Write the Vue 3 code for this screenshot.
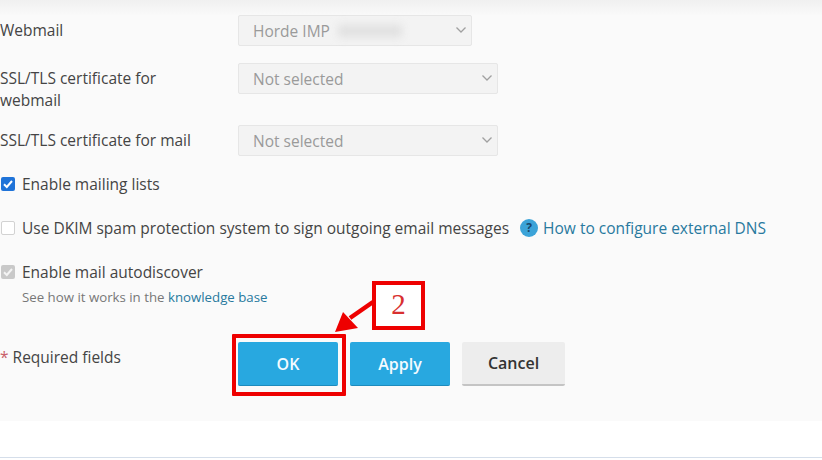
<script setup>
const selects = [
  { label: 'Webmail', value: 'Horde IMP', blurred: true, narrow: true },
  { label: 'SSL/TLS certificate for webmail', value: 'Not selected' },
  { label: 'SSL/TLS certificate for mail', value: 'Not selected' }
]
</script>

<template>
  <div class="page">
    <div class="panel">
      <div v-for="s in selects" :key="s.label" class="row">
        <div class="label">{{ s.label }}</div>
        <div class="select" :class="{ narrow: s.narrow }">
          <span>{{ s.value }}</span>
          <span v-if="s.blurred" class="smudge"></span>
          <svg class="chevron" width="12" height="8" viewBox="0 0 12 8">
            <path d="M1.5 1.5 6 6l4.500-4.500" fill="none" stroke="#a0a0a0" stroke-width="1.300" />
          </svg>
        </div>
      </div>

      <div class="check first">
        <span class="box on">
          <svg width="14" height="14" viewBox="0 0 14 14">
            <path d="M3 7.300 5.800 10 11 4" fill="none" stroke="#fff" stroke-width="2" />
          </svg>
        </span>
        <span>Enable mailing lists</span>
      </div>

      <div class="check">
        <span class="box"></span>
        <span>Use DKIM spam protection system to sign outgoing email messages</span>
        <span class="help">?</span>
        <a class="link">How to configure external DNS</a>
      </div>

      <div class="check">
        <span class="box off">
          <svg width="14" height="14" viewBox="0 0 14 14">
            <path d="M3 7.300 5.800 10 11 4" fill="none" stroke="#f4f4f4" stroke-width="2" />
          </svg>
        </span>
        <span>Enable mail autodiscover</span>
      </div>
      <div class="hint">See how it works in the <a class="link">knowledge base</a></div>

      <div class="actions">
        <div class="required"><span class="star">*</span> Required fields</div>
        <button class="btn primary">OK</button>
        <button class="btn primary">Apply</button>
        <button class="btn plain">Cancel</button>
      </div>
    </div>

    <div class="rule"></div>

    <!-- red annotation on top of the screenshot -->
    <div class="mark-ok"></div>
    <div class="mark-num">2</div>
    <svg class="mark-arrow" width="60" height="60" viewBox="0 0 60 60">
      <path d="M38 4 15 20" stroke="#ee0000" stroke-width="4.500" fill="none" />
      <path d="M0 34 8 14 23 30Z" fill="#ee0000" />
    </svg>
  </div>
</template>

<style scoped>
.page {
  position: relative;
  width: 822px;
  height: 460px;
  overflow: hidden;
  background: #fff;
  font-family: "Open Sans", "Liberation Sans", sans-serif;
  font-size: 15.5px;
  color: #444;
}

.panel {
  height: 421px;
  padding-top: 15px;
  box-sizing: border-box;
  background: linear-gradient(#f0f0f0, #fafafa 16px);
}

.row {
  display: flex;
  margin-bottom: 14px;
}

.row:first-child {
  margin-bottom: 17px;
}

.label {
  width: 238px;
  padding: 4px 38px 0 0;
  box-sizing: border-box;
  line-height: 22px;
}

.select {
  position: relative;
  display: flex;
  align-items: center;
  width: 260px;
  height: 31px;
  padding: 1px 0 0 14px;
  box-sizing: border-box;
  border: 1px solid #e6e6e6;
  border-radius: 2px;
  background: #f3f3f3;
  color: #9a9a9a;
  font-size: 15.5px;
}

.select.narrow {
  width: 234px;
}

.smudge {
  width: 64px;
  height: 12px;
  margin-left: 8px;
  background: #e0e0e0;
  filter: blur(4px);
}

.chevron {
  position: absolute;
  right: 4px;
  top: 10px;
}

.check {
  display: flex;
  align-items: center;
  height: 22px;
  margin-top: 22px;
}

.check.first {
  margin-top: 17px;
}

.box {
  display: flex;
  width: 14px;
  height: 14px;
  margin: 0 7px 0 1px;
  box-sizing: border-box;
  border: 1px solid #d2d2d2;
  border-radius: 2px;
  background: #fff;
}

.box.on {
  border: 0;
  background: #1f73d8;
}

.box.off {
  border: 0;
  background: #c9c9c9;
}

.help {
  width: 18px;
  height: 18px;
  margin: 0 5px 0 11px;
  border-radius: 50%;
  background: #3ba3d8;
  color: #17466b;
  font-size: 12px;
  font-weight: 700;
  line-height: 18px;
  text-align: center;
}

.link {
  color: #28799e;
}

.hint {
  margin: 5px 0 0 22px;
  font-size: 13.250px;
  line-height: 18px;
  color: #777;
}

.actions {
  display: flex;
  align-items: flex-start;
  margin-top: 36px;
}

.required {
  width: 238px;
  line-height: 30px;
}

.star {
  color: #c9606a;
}

.btn {
  width: 100px;
  height: 44px;
  margin-right: 12px;
  padding: 0;
  border: 0;
  border-radius: 2px;
  font-family: inherit;
  font-size: 16px;
  font-weight: 600;
}

.btn.primary {
  background: #28a8e0;
  border-bottom: 1px solid #1d8bbd;
  color: #f4fbff;
}

.btn.plain {
  width: 103px;
  background: #ededed;
  border-bottom: 2px solid #c4c4c4;
  color: #333;
}

.rule {
  position: absolute;
  left: 0;
  right: 0;
  top: 457px;
  height: 1px;
  background: #d5deea;
}

.mark-ok {
  position: absolute;
  left: 232px;
  top: 334px;
  width: 114px;
  height: 62px;
  box-sizing: border-box;
  border: 4px solid #ee0000;
  border-radius: 1px;
}

.mark-num {
  position: absolute;
  left: 372px;
  top: 281px;
  width: 53px;
  height: 49px;
  box-sizing: border-box;
  border: 4px solid #ee0000;
  background: #fff;
  color: #d83030;
  font-family: "Liberation Serif", serif;
  font-size: 29px;
  line-height: 38px;
  text-align: center;
}

.mark-arrow {
  position: absolute;
  left: 335px;
  top: 298px;
}
</style>
